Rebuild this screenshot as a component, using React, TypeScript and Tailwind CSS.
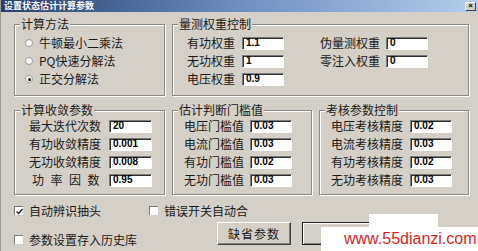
import React from "react";

const cjk = { fontFamily: '"Noto Sans CJK SC", "Noto Sans", sans-serif' };

function Group({ title, className, children }: { title: string; className: string; children: React.ReactNode }) {
  return (
    <div className={`relative border border-[#8a8a86] shadow-[inset_1px_1px_0_#fff,1px_1px_0_#fff] ${className}`}>
      <span className="absolute left-[5px] top-[-9px] bg-[#d4d0c8] px-[1px] text-[12px] leading-[16px] text-[#1a1a1a]">{title}</span>
      {children}
    </div>
  );
}

function Input({ value, w = "w-[42px]" }: { value: string; w?: string }) {
  return (
    <div
      className={`${w} h-[13px] bg-white border-t border-l border-[#7a7a7a] border-b border-r border-b-white border-r-white shadow-[inset_1px_1px_0_#303030] pl-[3px] flex items-center text-[10px] font-bold leading-none text-black`}
      style={{ fontFamily: '"Liberation Sans", Arial, sans-serif' }}
    >
      {value}
    </div>
  );
}

function Row({ label, value, labelW, inputW }: { label: React.ReactNode; value: string; labelW: string; inputW?: string }) {
  return (
    <div className="h-[18px] flex items-center">
      <div className={`${labelW} text-[12px] leading-none text-[#1a1a1a] whitespace-nowrap`}>{label}</div>
      <Input value={value} w={inputW} />
    </div>
  );
}

function Radio({ label, checked }: { label: string; checked?: boolean }) {
  return (
    <div className="h-[18px] flex items-center">
      <div className="ml-[10px] w-[8px] h-[8px] rounded-full bg-white border border-[#9a9a9a] flex items-center justify-center">
        {checked && <div className="w-[3px] h-[3px] rounded-full bg-black" />}
      </div>
      <span className="ml-[6px] text-[12px] leading-none text-[#1a1a1a]">{label}</span>
    </div>
  );
}

function Check({ label, checked }: { label: string; checked?: boolean }) {
  return (
    <div className="flex items-center h-[15px]">
      <div className="w-[9px] h-[9px] bg-white border-t border-l border-[#7a7a7a] flex items-center justify-center">
        {checked && (
          <svg width="7" height="7" viewBox="0 0 7 7">
            <path d="M0.5 3.5 L2.5 5.5 L6.5 1" stroke="#222" strokeWidth="1.4" fill="none" />
          </svg>
        )}
      </div>
      <span className="ml-[6px] text-[12px] leading-none text-[#1a1a1a]">{label}</span>
    </div>
  );
}

export default function App() {
  return (
    <div className="relative w-[478px] h-[251px] overflow-hidden bg-[#d4d0c8] border-l border-[#9a9a96]" style={cjk}>
      {/* title bar */}
      <div className="h-[12px] flex items-center justify-between bg-gradient-to-r from-[#24406e] via-[#6f8fc0] to-[#b4cdec]">
        <span className="ml-[3px] text-[9px] font-bold leading-[12px] text-white whitespace-nowrap">设置状态估计计算参数</span>
        <div className="mr-[2px] w-[11px] h-[9px] bg-[#d4d0c8] border border-t-white border-l-white border-b-[#404040] border-r-[#404040] flex items-center justify-center text-[8px] font-bold leading-none text-black" style={{ fontFamily: '"Liberation Sans", Arial, sans-serif' }}>
          ×
        </div>
      </div>

      {/* top row */}
      <div className="pl-[13px] pt-[12px] flex gap-[7px]">
        <Group title="计算方法" className="w-[151px] h-[72px]">
          <div className="pt-[9px] flex flex-col">
            <Radio label="牛顿最小二乘法" />
            <Radio label="PQ快速分解法" />
            <Radio label="正交分解法" checked />
          </div>
        </Group>
        <Group title="量测权重控制" className="w-[297px] h-[72px]">
          <div className="pt-[9px] pl-[14px] flex">
            <div className="flex flex-col w-[133px]">
              <Row label="有功权重" value="1.1" labelW="w-[55px]" />
              <Row label="无功权重" value="1" labelW="w-[55px]" />
              <Row label="电压权重" value="0.9" labelW="w-[55px]" />
            </div>
            <div className="flex flex-col">
              <Row label="伪量测权重" value="0" labelW="w-[66px]" />
              <Row label="零注入权重" value="0" labelW="w-[66px]" />
            </div>
          </div>
        </Group>
      </div>

      {/* middle row */}
      <div className="pl-[13px] mt-[14px] flex gap-[7px]">
        <Group title="计算收敛参数" className="w-[151px] h-[85px]">
          <div className="pt-[6px] pl-[14px] flex flex-col">
            <Row label="最大迭代次数" value="20" labelW="w-[80px]" inputW="w-[43px]" />
            <Row label="有功收敛精度" value="0.001" labelW="w-[80px]" inputW="w-[43px]" />
            <Row label="无功收敛精度" value="0.008" labelW="w-[80px]" inputW="w-[43px]" />
            <Row
              label={
                <span className="ml-[3px] flex gap-[6.5px]">
                  <span>功</span>
                  <span>率</span>
                  <span>因</span>
                  <span>数</span>
                </span>
              }
              value="0.95"
              labelW="w-[80px]"
              inputW="w-[43px]"
            />
          </div>
        </Group>
        <Group title="估计判断门槛值" className="w-[140px] h-[85px]">
          <div className="pt-[6px] pl-[11px] flex flex-col">
            <Row label="电压门槛值" value="0.03" labelW="w-[66px]" />
            <Row label="电流门槛值" value="0.03" labelW="w-[66px]" />
            <Row label="有功门槛值" value="0.02" labelW="w-[66px]" />
            <Row label="无功门槛值" value="0.03" labelW="w-[66px]" />
          </div>
        </Group>
        <Group title="考核参数控制" className="w-[150px] h-[85px]">
          <div className="pt-[6px] pl-[11px] flex flex-col">
            <Row label="电压考核精度" value="0.02" labelW="w-[79px]" />
            <Row label="电流考核精度" value="0.03" labelW="w-[79px]" />
            <Row label="有功考核精度" value="0.02" labelW="w-[79px]" />
            <Row label="无功考核精度" value="0.03" labelW="w-[79px]" />
          </div>
        </Group>
      </div>

      {/* bottom */}
      <div className="pl-[13px] mt-[8px] flex">
        <div className="w-[135px]">
          <Check label="自动辨识抽头" checked />
        </div>
        <Check label="错误开关自动合" />
      </div>
      <div className="pl-[13px] mt-[4px] flex">
        <div className="w-[203px] mt-[10px]">
          <Check label="参数设置存入历史库" />
        </div>
        <button className="w-[74px] h-[23px] bg-[#d4d0c8] border border-t-white border-l-white border-b-[#404040] border-r-[#404040] shadow-[inset_-1px_-1px_0_#808080] text-[12px] leading-none text-[#1a1a1a] tracking-[1px]">
          缺省参数
        </button>
        <div className="ml-[11px] w-[74px] h-[23px] bg-[#d4d0c8] border border-[#202020] shadow-[inset_1px_1px_0_#fff,inset_-1px_-1px_0_#808080]" />
      </div>

      {/* watermark overlay */}
      <div className="absolute left-[368px] top-[214px] w-[69px] h-[14px] bg-white" />
      <div className="absolute left-[320px] top-[227px] w-[158px] h-[24px] bg-white flex items-center">
        <span className="ml-[23px] text-[16px] leading-none text-[#d91f1f]" style={{ fontFamily: '"Liberation Sans", Arial, sans-serif' }}>
          www.55dianzi.com
        </span>
      </div>
    </div>
  );
}
